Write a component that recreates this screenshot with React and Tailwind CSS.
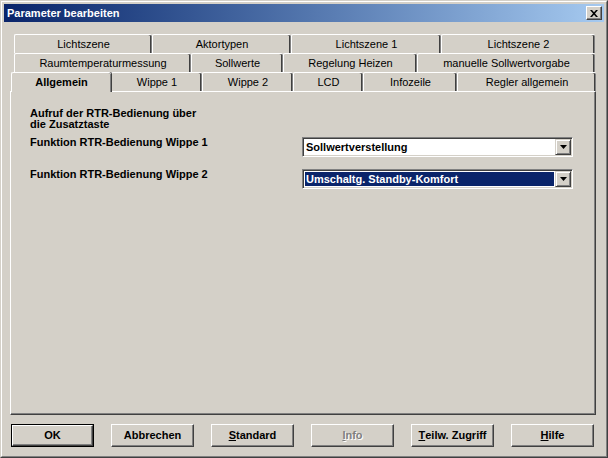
import { useState } from 'react';

const rows = [
  {
    offset: 'ml-[4px]',
    tabs: [
      { label: 'Lichtszene', w: 'w-[138px]' },
      { label: 'Aktortypen', w: 'w-[139px]' },
      { label: 'Lichtszene 1', w: 'w-[150px]' },
      { label: 'Lichtszene 2', w: 'w-[154px]' },
    ],
  },
  {
    offset: 'ml-[4px]',
    tabs: [
      { label: 'Raumtemperaturmessung', w: 'w-[177px]' },
      { label: 'Sollwerte', w: 'w-[92px]' },
      { label: 'Regelung Heizen', w: 'w-[134px]' },
      { label: 'manuelle Sollwertvorgabe', w: 'w-[178px]' },
    ],
  },
  {
    offset: 'ml-[1px]',
    tabs: [
      { label: 'Allgemein', w: 'w-[100px]', active: true },
      { label: 'Wippe 1', w: 'w-[91px]' },
      { label: 'Wippe 2', w: 'w-[91px]' },
      { label: 'LCD', w: 'w-[70px]' },
      { label: 'Infozeile', w: 'w-[94px]' },
      { label: 'Regler allgemein', w: 'w-[139px]' },
    ],
  },
];

const font = 'font-["Liberation_Sans",Arial,sans-serif]';

function Tab({ label, w, active }) {
  if (active) {
    return (
      <div className={`${w} relative z-10 -mb-[1px] flex h-[20px] items-center justify-center rounded-t-[2px] border-t border-l border-t-white border-l-white bg-[#d4d0c8] text-[11px] font-bold shadow-[inset_-1px_0_0_#808080,1px_0_0_#404040]`}>
        {label}
      </div>
    );
  }
  return (
    <div className={`${w} flex h-[19px] items-center justify-center rounded-t-[2px] border-t border-l border-t-white border-l-white text-[11px] shadow-[inset_-1px_0_0_#808080,inset_-2px_0_0_#404040]`}>
      {label}
    </div>
  );
}

function ArrowButton() {
  return (
    <div className="flex h-[16px] w-[16px] shrink-0 items-center justify-center border border-t-[#d4d0c8] border-l-[#d4d0c8] border-r-[#404040] border-b-[#404040] bg-[#d4d0c8] shadow-[inset_1px_1px_0_#fff,inset_-1px_-1px_0_#808080]">
      <svg width="7" height="4" viewBox="0 0 7 4">
        <path d="M0 0h7L3.5 4z" fill="#000" />
      </svg>
    </div>
  );
}

function Select({ value, selected }) {
  return (
    <div className="flex h-[20px] w-[271px] items-center border border-t-[#808080] border-l-[#808080] border-r-white border-b-white bg-white p-[1px] shadow-[inset_1px_1px_0_#404040,inset_-1px_-1px_0_#d4d0c8]">
      <div className="flex h-full flex-1 items-center pl-[1px] pr-[1px]">
        <div className={`flex h-[14px] flex-1 items-center px-[1px] text-[11px] font-bold ${selected ? 'bg-[#0a246a] text-white' : 'text-black'}`}>
          {value}
        </div>
      </div>
      <ArrowButton />
    </div>
  );
}

function Button({ children, isDefault, disabled }) {
  return (
    <button
      className={`flex h-[23px] w-[83px] items-center justify-center text-[11px] font-bold ${isDefault ? 'border border-black' : ''}`}
    >
      <span
        className={`flex h-full w-full items-center justify-center border border-t-white border-l-white border-r-[#404040] border-b-[#404040] shadow-[inset_-1px_-1px_0_#808080] ${disabled ? 'text-[#808080] [text-shadow:1px_1px_0_#fff]' : 'text-black'}`}
      >
        {children}
      </span>
    </button>
  );
}

export default function App() {
  const [tab] = useState('Allgemein');

  return (
    <div className={`${font} h-[458px] w-[608px] border border-t-[#d4d0c8] border-l-[#d4d0c8] border-r-[#404040] border-b-[#404040] bg-[#d4d0c8] text-black`}>
      <div className="flex h-full flex-col border border-t-white border-l-white border-r-[#808080] border-b-[#808080] p-[2px]">
        <div className="flex h-[18px] items-center justify-between bg-gradient-to-r from-[#0a246a] to-[#a6caf0] pl-[3px] pr-[2px]">
          <span className="text-[11px] font-bold text-white">Parameter bearbeiten</span>
          <div className="flex h-[14px] w-[16px] items-center justify-center border border-t-white border-l-white border-r-[#404040] border-b-[#404040] bg-[#d4d0c8] shadow-[inset_-1px_-1px_0_#808080]">
            <svg width="8" height="7" viewBox="0 0 8 7">
              <path d="M0 0h2l2 2.3L6 0h2L5 3.5 8 7H6L4 4.7 2 7H0l3-3.5z" fill="#000" />
            </svg>
          </div>
        </div>

        <div className="mt-[12px] pl-[6px]">
          {rows.map((row, i) => (
            <div key={i} className={`flex ${row.offset}`}>
              {row.tabs.map((t) => (
                <Tab key={t.label} {...t} active={t.label === tab} />
              ))}
            </div>
          ))}

          <div className="h-[324px] w-[586px] border border-t-white border-l-white border-r-[#404040] border-b-[#404040] shadow-[inset_-1px_-1px_0_#808080] pl-[19px] pt-[16px] text-[11px] font-bold leading-[11px]">
            <p>Aufruf der RTR-Bedienung über</p>
            <p>die Zusatztaste</p>
            <div className="mt-[6px] flex">
              <p className="w-[272px] pt-[1px]">Funktion RTR-Bedienung Wippe 1</p>
              <div className="mt-[1px]">
                <Select value="Sollwertverstellung" />
              </div>
            </div>
            <div className="mt-[11px] flex">
              <p className="w-[272px] pt-[1px]">Funktion RTR-Bedienung Wippe 2</p>
              <div className="mt-[1px]">
                <Select value="Umschaltg. Standby-Komfort" selected />
              </div>
            </div>
          </div>
        </div>

        <div className="mt-[9px] flex gap-[17px] pl-[7px]">
          <Button isDefault>OK</Button>
          <Button>Abbrechen</Button>
          <Button>
            <u>S</u>tandard
          </Button>
          <Button disabled>
            <u>I</u>nfo
          </Button>
          <Button>
            <u>T</u>eilw. Zugriff
          </Button>
          <Button>
            <u>H</u>ilfe
          </Button>
        </div>
      </div>
    </div>
  );
}
